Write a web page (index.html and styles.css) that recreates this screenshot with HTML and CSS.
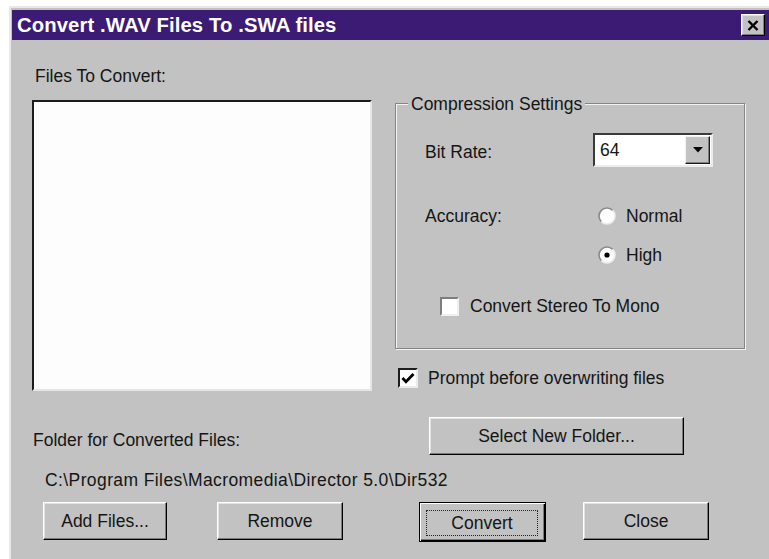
FILE: index.html
```html
<!DOCTYPE html>
<html lang="en">
<head>
<meta charset="utf-8">
<title>Convert .WAV Files To .SWA files</title>
<link rel="stylesheet" href="styles.css">
</head>
<body>
<div class="window">
  <div class="titlebar">
    <span class="title">Convert .WAV Files To .SWA files</span>
    <button class="close-btn" aria-label="Close">
      <svg width="12" height="11" viewBox="0 0 12 11"><path d="M1.5 1 L10.5 10 M10.5 1 L1.5 10" stroke="#000" stroke-width="2.4" fill="none"/></svg>
    </button>
  </div>

  <div class="content">
    <div class="top">
      <div class="files">
        <div class="files-label">Files To Convert:</div>
        <div class="listbox"></div>
      </div>

      <div class="settings">
        <div class="group">
          <span class="group-title">Compression Settings</span>

          <div class="row-bitrate">
            <span class="bitrate-label">Bit Rate:</span>
            <div class="combo">
              <span class="combo-value">64</span>
              <span class="combo-btn">
                <svg width="10" height="6" viewBox="0 0 10 6"><path d="M0 0 H10 L5 5.5 Z" fill="#000"/></svg>
              </span>
            </div>
          </div>

          <div class="row-accuracy">
            <span class="accuracy-label">Accuracy:</span>
            <div class="radios">
              <div class="radio">
                <svg width="18" height="18" viewBox="0 0 18 18"><circle cx="9" cy="9" r="8" fill="#fff"/><path d="M3.34 14.66 A8 8 0 0 1 14.66 3.34" stroke="#8a8a8a" stroke-width="1.6" fill="none"/><path d="M14.66 3.34 A8 8 0 0 1 3.34 14.66" stroke="#ececec" stroke-width="1.6" fill="none"/></svg>
                <span>Normal</span>
              </div>
              <div class="radio radio-high">
                <svg width="18" height="18" viewBox="0 0 18 18"><circle cx="9" cy="9" r="8" fill="#fff"/><path d="M3.34 14.66 A8 8 0 0 1 14.66 3.34" stroke="#8a8a8a" stroke-width="1.6" fill="none"/><path d="M14.66 3.34 A8 8 0 0 1 3.34 14.66" stroke="#ececec" stroke-width="1.6" fill="none"/><circle cx="9" cy="9" r="2.6" fill="#000"/></svg>
                <span>High</span>
              </div>
            </div>
          </div>

          <div class="check row-stereo">
            <span class="box box-light"></span>
            <span>Convert Stereo To Mono</span>
          </div>
        </div>

        <div class="check row-prompt">
          <span class="box box-dark">
            <svg width="14" height="13" viewBox="0 0 14 13"><path d="M1.5 6 L5 9.8 L12.5 2" stroke="#000" stroke-width="2.8" fill="none"/></svg>
          </span>
          <span>Prompt before overwriting files</span>
        </div>
      </div>
    </div>

    <div class="folder-row">
      <span class="folder-label">Folder for Converted Files:</span>
      <button class="btn btn-folder">Select New Folder...</button>
    </div>

    <div class="path">C:\Program Files\Macromedia\Director 5.0\Dir532</div>

    <div class="buttons">
      <button class="btn btn-add">Add Files...</button>
      <button class="btn btn-remove">Remove</button>
      <button class="btn btn-default btn-convert"><span class="focus">Convert</span></button>
      <button class="btn btn-close">Close</button>
    </div>
  </div>
</div>
</body>
</html>
```

FILE: styles.css
```css
html, body {
  margin: 0;
  background: #ffffff;
  overflow: hidden;
}

body {
  font-family: "Liberation Sans", Arial, sans-serif;
  font-size: 17.5px;
  color: #151515;
}

button {
  font: inherit;
  color: inherit;
  padding: 0;
  margin: 0;
  cursor: default;
}

/* dialog frame */
.window {
  margin: 6px 0 0 9px;
  height: 553px;
  box-sizing: border-box;
  border-top: 2px solid #e8e8e8;
  border-left: 2px solid #e8e8e8;
  padding: 2px 0 0 1px;
  background: #c1c2c1;
}

.titlebar {
  display: flex;
  align-items: center;
  height: 30px;
  padding: 0 4px 0 5px;
  background: #3b1b74;
}

.title {
  flex: 1;
  color: #ffffff;
  font-weight: bold;
  font-size: 20.3px;
  letter-spacing: 0.1px;
}

.close-btn {
  width: 24px;
  height: 22px;
  display: flex;
  align-items: center;
  justify-content: center;
  background: #c1c2c1;
  border: 1px solid;
  border-color: #ffffff #000000 #000000 #ffffff;
  box-shadow: inset -1px -1px #808080, inset 1px 1px #dfdfdf;
}

.content {
  padding: 26px 0 0 20px;
}

/* upper area: file list + settings */
.top {
  display: flex;
  align-items: flex-start;
  gap: 23px;
}

.files {
  width: 340px;
}

.files-label {
  height: 20px;
  line-height: 20px;
  padding-left: 3px;
  margin-bottom: 14px;
}

.listbox {
  height: 291px;
  box-sizing: border-box;
  background: #fdfdfd;
  border: 2px solid;
  border-color: #1c1c1c #e6e6e6 #e6e6e6 #1c1c1c;
}

.settings {
  width: 350px;
  margin-top: 37px;
}

.group {
  position: relative;
  height: 246px;
  box-sizing: border-box;
  border: 1px solid #858585;
  box-shadow: inset 1px 1px #f4f4f4, 1px 1px 0 #f4f4f4;
  padding: 29px 0 0 29px;
}

.group-title {
  position: absolute;
  top: -10px;
  left: 12px;
  padding: 0 3px;
  line-height: 20px;
  background: #c1c2c1;
}

.row-bitrate {
  display: flex;
  align-items: center;
  height: 34px;
}

.bitrate-label {
  width: 168px;
  padding-top: 4px;
}

.combo {
  width: 120px;
  height: 34px;
  box-sizing: border-box;
  display: flex;
  align-items: center;
  background: #ffffff;
  border: 2px solid;
  border-color: #3a3a3a #ececec #ececec #3a3a3a;
  padding: 1px 1px 1px 0;
}

.combo-value {
  flex: 1;
  padding-left: 5px;
}

.combo-btn {
  width: 25px;
  height: 28px;
  box-sizing: border-box;
  display: flex;
  align-items: center;
  justify-content: center;
  background: #c1c2c1;
  border: 1px solid;
  border-color: #f2f2f2 #1a1a1a #1a1a1a #f2f2f2;
  box-shadow: inset -1px -1px #808080;
}

.row-accuracy {
  display: flex;
  margin-top: 34px;
}

.accuracy-label {
  width: 173px;
  height: 30px;
  line-height: 30px;
}

.radio {
  display: flex;
  align-items: center;
  gap: 10px;
  height: 30px;
}

.radio-high {
  margin-top: 9px;
}

.check {
  display: flex;
  align-items: center;
  height: 30px;
}

.box {
  width: 19px;
  height: 19px;
  box-sizing: border-box;
  display: flex;
  align-items: center;
  justify-content: center;
  background: #ffffff;
  border: 2px solid;
}

.box-light {
  border-color: #7e7e7e #f0f0f0 #f0f0f0 #7e7e7e;
}

.box-dark {
  width: 20px;
  height: 20px;
  border-color: #1c1c1c #ececec #ececec #1c1c1c;
}

.row-stereo {
  margin-top: 21px;
  padding-left: 15px;
  gap: 11px;
}

.row-prompt {
  margin-top: 14px;
  padding-left: 3px;
  gap: 10px;
}

/* folder selection */
.folder-row {
  display: flex;
  align-items: flex-start;
  margin-top: 24px;
}

.folder-label {
  width: 396px;
  padding-left: 1px;
  margin-top: 13px;
}

.btn {
  height: 38px;
  box-sizing: border-box;
  background: #c1c2c1;
  border: 1px solid;
  border-color: #ffffff #000000 #000000 #ffffff;
  box-shadow: inset -1px -1px #7a7a7a, inset 1px 1px #e2e2e2;
  text-align: center;
}

.btn-folder {
  width: 255px;
}

.path {
  margin-top: 15px;
  height: 20px;
  line-height: 20px;
  padding-left: 13px;
  letter-spacing: 0.4px;
}

/* action buttons */
.buttons {
  display: flex;
  align-items: flex-start;
  margin-top: 12px;
  padding-left: 11px;
}

.btn-add {
  width: 124px;
}

.btn-remove {
  width: 126px;
  margin-left: 50px;
}

.btn-convert {
  width: 127px;
  height: 40px;
  margin-left: 76px;
}

.btn-default {
  display: flex;
  padding: 7px 7px 5px 6px;
  border: 1px solid #000000;
  box-shadow: inset 1px 1px #ffffff, inset -1px -1px #000000, inset -2px -2px #7a7a7a;
}

.focus {
  flex: 1;
  display: flex;
  align-items: center;
  justify-content: center;
  border: 1px dotted #222222;
}

.btn-close {
  width: 126px;
  margin-left: 37px;
}
```
